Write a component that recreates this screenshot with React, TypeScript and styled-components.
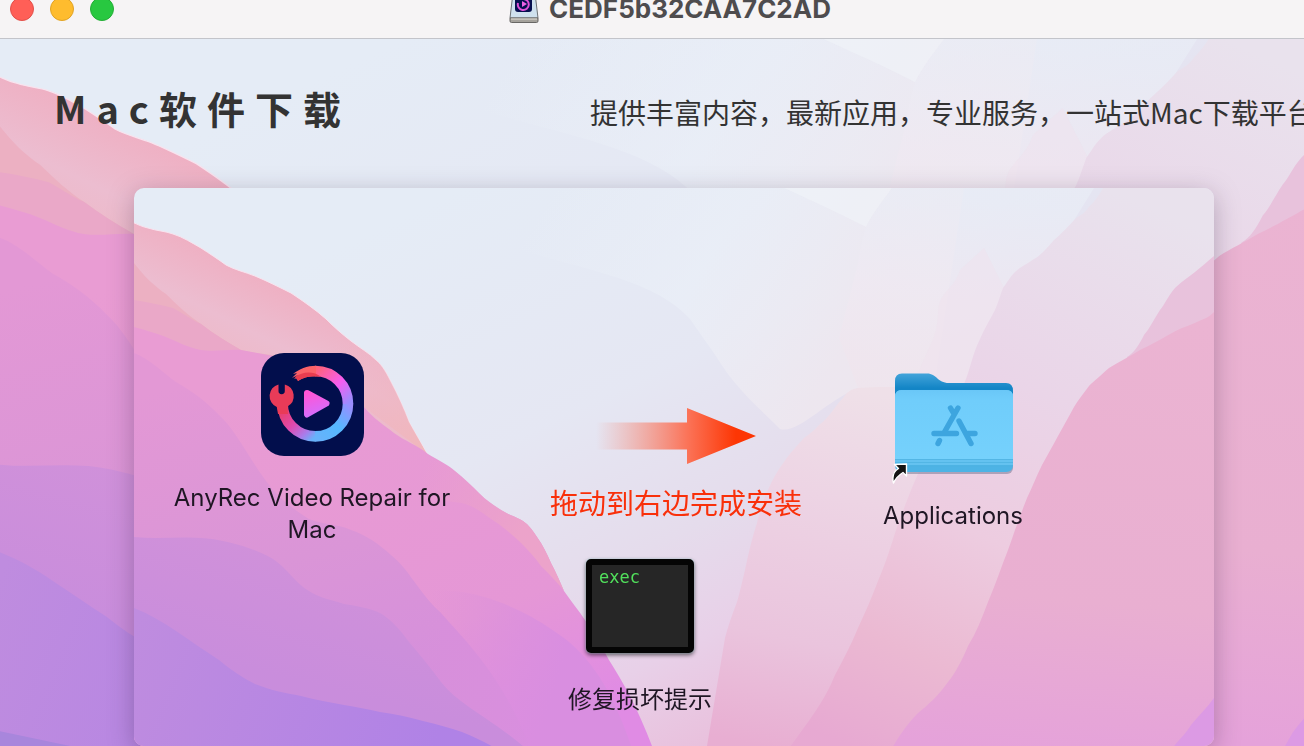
import React from "react";
import styled, { createGlobalStyle } from "styled-components";

const GlobalStyle = createGlobalStyle`
  *, *::before, *::after { box-sizing: border-box; }
  html, body { margin: 0; padding: 0; }
  body {
    font-family: Inter, "Noto Sans CJK SC", sans-serif;
    color: #1f1624;
  }
  h1, h2, p { margin: 0; }
`;

const Window = styled.div`
  display: flex;
  flex-direction: column;
  min-height: 100vh;
  overflow: hidden;
`;

const TitleBar = styled.header`
  display: grid;
  grid-template-columns: 1fr auto 1fr;
  grid-template-rows: 18px;
  align-items: center;
  height: 39px;
  padding: 0 10px 20px;
  overflow: hidden;
  background: #f6f4f5;
  border-bottom: 1px solid #c3c4ca;
`;

const Lights = styled.div`
  display: flex;
  gap: 16px;
`;

const Light = styled.button<{ $fill: string; $rim: string }>`
  width: 24px;
  height: 24px;
  padding: 0;
  border: 1px solid ${(p) => p.$rim};
  border-radius: 50%;
  background: ${(p) => p.$fill};
`;

const WindowTitle = styled.h1`
  display: flex;
  align-items: center;
  gap: 10px;
  padding-left: 36px;
  font-size: 26px;
  line-height: 32px;
  font-weight: 700;
  color: #4e4c4e;
  svg { display: block; }
`;

const Desktop = styled.main`
  position: relative;
  flex: 1;
  display: flex;
  flex-direction: column;
  isolation: isolate;
`;

const Backdrop = styled.svg`
  position: absolute;
  inset: 0;
  z-index: -1;
  width: 100%;
  height: 100%;
`;

const Banner = styled.div`
  display: grid;
  grid-template-columns: 536px 1fr;
  align-items: baseline;
  height: 149px;
  padding: 41px 0 0 54px;
  font-family: "Noto Sans CJK SC", sans-serif;
  color: #333;
  white-space: nowrap;
`;

const Brand = styled.h2`
  font-size: 38px;
  line-height: 56px;
  font-weight: 700;
  letter-spacing: 10px;
`;

const Tagline = styled.p`
  font-size: 28px;
  line-height: 40px;
`;

const Panel = styled.section`
  position: relative;
  isolation: isolate;
  flex: 1;
  display: grid;
  grid-template-columns: minmax(0, 356fr) minmax(0, 300fr) minmax(0, 326fr) minmax(0, 98fr);
  align-items: start;
  margin: 0 90px 0 134px;
  padding-bottom: 30px;
  border-radius: 10px;
  overflow: hidden;
`;

const PanelShade = styled.div`
  flex: 1;
  display: flex;
  filter: drop-shadow(0 6px 13px rgba(20, 5, 30, 0.26));
`;

const Column = styled.div<{ $top: number }>`
  display: flex;
  flex-direction: column;
  align-items: center;
  padding-top: ${(p) => p.$top}px;
`;

const FileItem = styled.button<{ $gap: number }>`
  display: flex;
  flex-direction: column;
  align-items: center;
  gap: ${(p) => p.$gap}px;
  max-width: 300px;
  padding: 0;
  border: 0;
  background: none;
  font: inherit;
  font-size: 24px;
  line-height: 32px;
  color: inherit;
  svg { display: block; }
`;

const Guide = styled.div`
  display: flex;
  flex-direction: column;
  align-items: center;
  gap: 22px;
  margin: 0 0 41px 72px;
  width: 252px;
  font-family: "Noto Sans CJK SC", sans-serif;
  font-size: 28px;
  line-height: 32px;
  color: #f9300a;
  white-space: nowrap;
  svg { display: block; }
`;

const Terminal = styled.span`
  width: 108px;
  height: 94px;
  padding: 4px 7px;
  border: 6px solid #050505;
  border-radius: 5px;
  background: #262626;
  box-shadow: 0 0 2px rgba(160, 220, 220, 0.8), 0 2px 4px rgba(0, 0, 0, 0.6);
  font-family: "DejaVu Sans Mono", monospace;
  font-size: 17px;
  line-height: 16px;
  text-align: left;
  color: #51e05c;
`;

function Wallpaper({ id, viewBox }: { id: string; viewBox: string }) {
  const u = (n: string) => `url(#${id}-${n})`;
  return (
    <Backdrop viewBox={viewBox} preserveAspectRatio="none" aria-hidden="true">
      <defs>
        <linearGradient id={`${id}-sky`} gradientUnits="userSpaceOnUse" x1="330" y1="0" x2="600" y2="560">
          <stop offset="0" stopColor="#e5ecf6" />
          <stop offset="0.4" stopColor="#e5e7f3" />
          <stop offset="0.65" stopColor="#e5dcec" />
          <stop offset="0.82" stopColor="#e8d0e8" />
          <stop offset="1" stopColor="#e9bedb" />
        </linearGradient>
        <linearGradient id={`${id}-mist`} gradientUnits="userSpaceOnUse" x1="380" y1="60" x2="660" y2="240">
          <stop offset="0" stopColor="#ebf1f8" stopOpacity="0" />
          <stop offset="0.5" stopColor="#ebf0f8" stopOpacity="0.8" />
          <stop offset="1" stopColor="#efe8ef" />
        </linearGradient>
        <linearGradient id={`${id}-veil`} gradientUnits="userSpaceOnUse" x1="800" y1="0" x2="760" y2="250">
          <stop offset="0" stopColor="#e9edf6" />
          <stop offset="0.4" stopColor="#efe9f2" />
          <stop offset="1" stopColor="#f0e2ea" />
        </linearGradient>
        <linearGradient id={`${id}-petal`} gradientUnits="userSpaceOnUse" x1="710" y1="200" x2="640" y2="560">
          <stop offset="0" stopColor="#efe0e8" />
          <stop offset="0.3" stopColor="#edd4e4" />
          <stop offset="0.7" stopColor="#eac4dd" />
          <stop offset="1" stopColor="#e8aed2" />
        </linearGradient>
        <linearGradient id={`${id}-lilac`} gradientUnits="userSpaceOnUse" x1="970" y1="0" x2="720" y2="560">
          <stop offset="0" stopColor="#e9e2ed" />
          <stop offset="0.35" stopColor="#ead5e8" />
          <stop offset="0.6" stopColor="#edcce0" />
          <stop offset="0.82" stopColor="#ebb9d2" />
          <stop offset="1" stopColor="#e7a9d2" />
        </linearGradient>
        <linearGradient id={`${id}-rose`} gradientUnits="userSpaceOnUse" x1="1000" y1="130" x2="960" y2="570">
          <stop offset="0" stopColor="#ebb4d2" />
          <stop offset="0.65" stopColor="#e9afd1" />
          <stop offset="1" stopColor="#e5a2da" />
        </linearGradient>
        <linearGradient id={`${id}-coral`} gradientUnits="userSpaceOnUse" x1="160" y1="100" x2="95" y2="230">
          <stop offset="0" stopColor="#efafc2" />
          <stop offset="0.4" stopColor="#ecbdd0" />
          <stop offset="1" stopColor="#efb4be" />
        </linearGradient>
        <linearGradient id={`${id}-peach`} gradientUnits="userSpaceOnUse" x1="210" y1="150" x2="280" y2="260">
          <stop offset="0" stopColor="#f0b4c3" stopOpacity="0" />
          <stop offset="1" stopColor="#f0b7bd" />
        </linearGradient>
        <linearGradient id={`${id}-blush`} gradientUnits="userSpaceOnUse" x1="290" y1="280" x2="390" y2="340">
          <stop offset="0" stopColor="#eba1c9" stopOpacity="0" />
          <stop offset="1" stopColor="#eca3ca" />
        </linearGradient>
        <linearGradient id={`${id}-orchid`} gradientUnits="userSpaceOnUse" x1="200" y1="160" x2="360" y2="560">
          <stop offset="0" stopColor="#e99cd3" />
          <stop offset="0.7" stopColor="#e597d6" />
          <stop offset="1" stopColor="#e08be4" />
        </linearGradient>
        <linearGradient id={`${id}-mauve`} gradientUnits="userSpaceOnUse" x1="120" y1="180" x2="210" y2="560">
          <stop offset="0" stopColor="#e398d5" />
          <stop offset="0.5" stopColor="#da95d7" />
          <stop offset="1" stopColor="#d48ddd" />
        </linearGradient>
        <linearGradient id={`${id}-fade`} gradientUnits="userSpaceOnUse" x1="290" y1="430" x2="430" y2="470">
          <stop offset="0" stopColor="#d991da" stopOpacity="0" />
          <stop offset="1" stopColor="#d98ee0" />
        </linearGradient>
        <linearGradient id={`${id}-grape`} gradientUnits="userSpaceOnUse" x1="100" y1="350" x2="70" y2="470">
          <stop offset="0" stopColor="#d091da" />
          <stop offset="1" stopColor="#c98ddc" />
        </linearGradient>
        <linearGradient id={`${id}-violet`} gradientUnits="userSpaceOnUse" x1="0" y1="440" x2="300" y2="560">
          <stop offset="0" stopColor="#bf8cdf" />
          <stop offset="1" stopColor="#b082e6" />
        </linearGradient>
      </defs>
      <rect x="0" y="0" width="1100" height="600" fill={u("sky")} />
      <path d="M380 0L380 60C440 80 520 90 556 131C566 146 577 160 587 176C602 200 625 220 646 241C665 246 690 214 724 200L800 200L830 0Z" fill={u("mist")} opacity="0.8" />
      <path d="M758 0C748 14 738 26 732 39C728 52 726 62 724 75L705 150L724 200L830 210L960 0Z" fill={u("veil")} opacity="0.7" />
      <path d="M650 0L758 0C748 14 738 26 732 39C705 25 680 14 650 0Z" fill="#f1f5f9" opacity="0.5" />
      <path d="M850 60L826 82C822 96 812 102 807 111C803 120 805 126 803 136C801 150 796 158 791 169L778 200L840 200L870 100Z" fill="#efe2ee" opacity="0.5" />
      <path d="M800 199L744 199L724 200C714 202 712 206 709 210C700 219 696 229 685 237C680 243 675 246 670 250C662 259 656 265 650 274C644 282 638 292 634 302C629 312 626 322 623 335C618 350 614 367 611 382C608 394 606 404 603 414C598 427 594 438 591 450L566 600L800 600Z" fill={u("petal")} />
      <path d="M969 0C964 9 960 14 955 19C951 25 947 27 942 30C934 39 928 45 920 52C913 60 906 68 900 71C893 76 886 79 881 84C875 90 873 95 869 100C866 108 864 115 861 122C856 132 850 141 846 151C842 159 840 165 838 172C835 182 833 189 830 196C815 226 797 256 783 288C775 306 769 323 763 339C757 358 751 377 744 393C738 409 731 425 724 440C717 457 709 472 701 487C685 528 650 560 630 600L1100 600L1100 0Z" fill={u("lilac")} />
      <path d="M1100 50L1080 68C1073 74 1067 79 1061 84C1052 91 1046 95 1041 100C1034 108 1031 116 1026 122C1020 131 1016 140 1010 147C1005 157 1000 165 993 169L990 200L1100 160Z" fill="#e8c2dc" />
      <path d="M1100 112L1080 124C1074 130 1070 131 1065 133C1055 138 1046 140 1038 145C1025 152 1017 157 1006 162C995 169 984 174 975 180C966 188 960 193 955 198C949 206 944 212 940 219C934 230 929 239 924 248C918 259 913 268 908 277C902 289 898 300 893 310C888 322 885 332 881 342C877 354 873 365 869 375C864 389 859 402 854 414C848 430 842 445 834 458C828 472 822 484 814 494C804 508 794 517 783 526C770 540 755 560 740 600L1100 600Z" fill={u("rose")} />
      <path d="M1100 488L1080 510C1073 520 1065 527 1057 537C1051 547 1045 551 1034 566L1015 600L1100 600Z" fill="#dc9ae4" />

      <path d="M-2 34C5 37 9 39 14 40C23 43 31 43 39 46C49 49 58 55 67 60C76 66 84 71 92 77C101 82 111 84 121 88C133 93 145 99 157 105C169 113 182 122 192 131C200 139 208 146 217 153C226 160 235 165 242 172C249 178 253 186 257 194C264 207 270 221 275 234C281 246 288 256 293 266L260 300L-2 300Z" fill={u("coral")} stroke="#f8e3ee" strokeWidth="1" />
      <path d="M217 153C226 160 235 165 242 172C249 178 253 186 257 194C264 207 270 221 275 234L293 266L230 219L150 170Z" fill={u("peach")} />
      <path d="M0 75C10 88 20 98 32 106C43 117 55 128 67 136C80 146 93 154 107 162C125 167 140 165 155 172L0 260Z" fill="#ecb0c2" />
      <path d="M0 112C14 114 27 117 39 120C50 126 58 132 67 136C80 146 93 154 107 162L80 220L0 220Z" fill="#eaa8c8" />
      <path d="M0 139C11 142 22 145 32 149C44 154 55 160 67 162C80 164 94 161 107 162C118 164 129 166 139 168C170 178 205 196 230 219C240 231 250 237 260 245C271 253 283 257 294 266C304 272 313 276 321 283C330 290 338 298 346 306C352 312 358 316 364 320C372 326 381 328 389 333C395 337 399 343 403 349C409 357 413 366 417 375C422 384 426 394 430 403C437 413 445 423 451 432C460 445 468 459 475 472C482 483 489 495 496 508C504 524 511 540 518 558L534 600L0 600Z" fill={u("orchid")} />
      <path d="M321 283C330 290 338 298 346 306C352 312 358 316 364 320C372 326 381 328 389 333C395 337 399 343 403 349C409 357 413 366 417 375C422 384 426 394 430 403C424 395 416 387 407 378C401 369 393 361 385 353C376 345 367 337 357 331C348 324 339 318 328 315L296 311L280 270L294 266Z" fill={u("blush")} />
      <path d="M0 165C16 171 28 184 42 194C58 203 73 214 85 227C97 238 105 252 114 266C122 279 130 291 139 302C150 314 162 323 175 331C190 337 204 336 217 342C232 347 245 356 257 367C267 375 275 386 282 396C290 407 298 417 307 425L307 600L0 600Z" fill={u("mauve")} />
      <path d="M306 424C340 462 380 500 410 600L306 600Z" fill="#d78fdb" />
      <path d="M290 403C340 398 390 420 430 450C470 480 492 535 510 600L300 600Z" fill={u("fade")} />
      <path d="M0 349C30 352 60 346 89 353C107 357 124 362 139 371C153 380 162 396 175 403C186 410 198 412 210 416C223 418 235 420 246 425C258 432 267 443 275 454C286 467 297 480 307 494C315 504 325 512 335 519C354 532 374 545 389 558L420 600L0 600Z" fill={u("grape")} />
      <path d="M0 420C15 426 29 434 42 443C57 453 71 463 85 472C97 482 109 490 121 496C136 502 151 505 167 508C182 512 196 514 210 517C222 519 234 521 246 524C261 526 275 529 289 533C303 536 316 540 328 544C340 549 351 554 361 560L400 600L0 600Z" fill={u("violet")} />
      <path d="M0 565L70 580L0 600Z" fill="#a886dc" />
    </Backdrop>
  );
}

function DriveIcon() {
  return (
    <svg width="30" height="32" viewBox="0 0 30 32" aria-hidden="true">
      <path d="M4 0H26L29 25H1Z" fill="#cfe1ee" stroke="#6e7377" />
      <path d="M1 25H29V28Q29 29.500 27.500 29.500H2.500Q1 29.500 1 28Z" fill="#a5a29c" stroke="#686765" />
      <path d="M2 26H28" stroke="#e3e0d8" />
      <rect x="6" y="3" width="17" height="16" rx="3" fill="#07104f" />
      <path d="M9 10A5.500 5.500 0 1 0 14 6" fill="none" stroke="#df50d8" strokeWidth="2" />
      <path d="M13 8V14L18 11Z" fill="#ed62e6" />
    </svg>
  );
}

function AnyRecIcon() {
  return (
    <svg width="103" height="103" viewBox="0 0 103 103" aria-hidden="true">
      <defs>
        <linearGradient id="ring-a" gradientUnits="userSpaceOnUse" x1="22" y1="50" x2="54" y2="84">
          <stop offset="0" stopColor="#ec3b58" />
          <stop offset="0.5" stopColor="#e04ab0" />
          <stop offset="0.8" stopColor="#aa7bea" />
          <stop offset="1" stopColor="#68b2fb" />
        </linearGradient>
        <linearGradient id="ring-b" gradientUnits="userSpaceOnUse" x1="54" y1="84" x2="87" y2="50">
          <stop offset="0" stopColor="#68b2fb" />
          <stop offset="0.5" stopColor="#55b8ff" />
          <stop offset="1" stopColor="#9a8dff" />
        </linearGradient>
        <linearGradient id="ring-c" gradientUnits="userSpaceOnUse" x1="87" y1="51" x2="54" y2="18">
          <stop offset="0" stopColor="#9a8dff" />
          <stop offset="0.45" stopColor="#f65df0" />
          <stop offset="1" stopColor="#ff627b" />
        </linearGradient>
        <linearGradient id="play" x1="0" y1="0" x2="0.3" y2="1">
          <stop offset="0" stopColor="#ff55d5" />
          <stop offset="1" stopColor="#d76cfa" />
        </linearGradient>
      </defs>
      <rect width="103" height="103" rx="23" fill="#020e4c" />
      <path d="M21.600 50.700A32.700 32.700 0 0 0 54.300 83.400" fill="none" stroke="url(#ring-a)" strokeWidth="10.600" />
      <path d="M54 83.400A32.700 32.700 0 0 0 87 50.700" fill="none" stroke="url(#ring-b)" strokeWidth="10.600" />
      <path d="M87 51A32.700 32.700 0 0 0 54 18" fill="none" stroke="url(#ring-c)" strokeWidth="10.600" />
      <path d="M55 12.700C46 12.700 38 16 32 21L36 20L31 25L37 22L33 26L36 25L37 28C43 24 49 23 55 23.300Z" fill="#fb6268" />
      <path d="M34 24L37 28C43 24 49 23 60 23.800C53 18 42 18 34 24Z" fill="#e93d50" />
      <path d="M17.500 31.400A12 12 0 0 0 15.800 54L17 61H27L26.500 53.500A12 12 0 0 0 23.800 31.400V38A3.100 3.100 0 0 1 17.500 38Z" fill="#e93b58" />
      <path d="M46 40L65.500 50.500L46 61.500Z" fill="url(#play)" stroke="url(#play)" strokeWidth="6" strokeLinejoin="round" />
    </svg>
  );
}

function ApplicationsIcon() {
  return (
    <svg width="122" height="114" viewBox="22 22 122 114" aria-hidden="true">
      <defs>
        <linearGradient id="folder-back" x1="0" y1="0" x2="0" y2="1">
          <stop offset="0" stopColor="#43a4da" />
          <stop offset="0.4" stopColor="#1385c6" />
          <stop offset="1" stopColor="#1385c6" />
        </linearGradient>
        <linearGradient id="folder-front" x1="0" y1="0" x2="0" y2="1">
          <stop offset="0" stopColor="#6ac7f7" />
          <stop offset="0.15" stopColor="#70cdfb" />
          <stop offset="1" stopColor="#75d1fc" />
        </linearGradient>
      </defs>
      <rect x="26" y="60" width="117" height="64" rx="6" fill="#6e7490" opacity="0.5" />
      <path d="M25 60V31Q25 23.500 32 23.500H57C67 23.500 67 33 79 33H136Q143 33 143 41V60Z" fill="url(#folder-back)" />
      <path d="M25 47Q25 40 32 40H136Q143 40 143 47V115Q143 122 136 122H32Q25 122 25 115Z" fill="#4db3e5" />
      <path d="M25 47Q25 40 32 40H136Q143 40 143 47V115H25Z" fill="#64c2f0" />
      <path d="M25 47Q25 40 32 40H136Q143 40 143 47V109H25Z" fill="url(#folder-front)" />
      <path d="M25 109.500H143M25 112.500H143M25 116H143" stroke="#4fb2e2" strokeWidth="0.800" />
      <path d="M88 58L74.500 82M80.500 58L84 64M89 71L101 93.500M64 83.500H86.500M98 83.500H105M69.500 90.500L68 93.500" fill="none" stroke="#3da5df" strokeWidth="5.400" strokeLinecap="round" />
      <path d="M24.500 114.500L36.500 114V126L33 122.500Q26 127 23.500 133Q21 123 28.500 118.500Z" fill="#151515" stroke="#fff" strokeWidth="1.400" strokeLinejoin="round" />
    </svg>
  );
}

function DragArrow() {
  return (
    <svg width="160" height="56" viewBox="0 0 160 56" aria-hidden="true">
      <defs>
        <linearGradient id="drag" gradientUnits="userSpaceOnUse" x1="0" y1="0" x2="140" y2="0">
          <stop offset="0" stopColor="#f58a78" stopOpacity="0" />
          <stop offset="0.65" stopColor="#fb7459" />
          <stop offset="1" stopColor="#fd3604" />
        </linearGradient>
      </defs>
      <path d="M0 14.500H91V0L160 28L91 56V41.500H0Z" fill="url(#drag)" />
    </svg>
  );
}

export default function App() {
  return (
    <>
      <GlobalStyle />
      <Window>
        <TitleBar>
          <Lights>
            <Light $fill="#ff5f57" $rim="#e2504a" aria-label="Close" />
            <Light $fill="#febc2e" $rim="#e1a325" aria-label="Minimize" />
            <Light $fill="#28c840" $rim="#24ad36" aria-label="Zoom" />
          </Lights>
          <WindowTitle>
            <DriveIcon />
            CEDF5b32CAA7C2AD
          </WindowTitle>
        </TitleBar>
        <Desktop>
          <Wallpaper id="back" viewBox="0 4 1043 573" />
          <Banner>
            <Brand>Mac软件下载</Brand>
            <Tagline>提供丰富内容，最新应用，专业服务，一站式Mac下载平台</Tagline>
          </Banner>
          <PanelShade>
            <Panel>
              <Wallpaper id="panel" viewBox="0 0 1080 558" />
              <Column $top={165}>
                <FileItem $gap={26}>
                  <AnyRecIcon />
                  AnyRec Video Repair for Mac
                </FileItem>
              </Column>
              <Column $top={220}>
                <Guide>
                  <DragArrow />
                  <p>拖动到右边完成安装</p>
                </Guide>
                <FileItem $gap={31}>
                  <Terminal>exec</Terminal>
                  修复损坏提示
                </FileItem>
              </Column>
              <Column $top={184}>
                <FileItem $gap={14}>
                  <ApplicationsIcon />
                  Applications
                </FileItem>
              </Column>
            </Panel>
          </PanelShade>
        </Desktop>
      </Window>
    </>
  );
}
